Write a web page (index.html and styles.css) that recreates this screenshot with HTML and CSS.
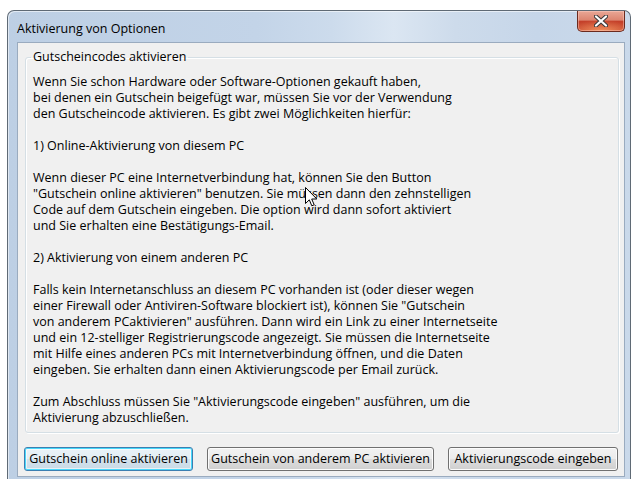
FILE: index.html
```html
<!DOCTYPE html>
<html lang="de">
<head>
<meta charset="utf-8">
<title>Aktivierung von Optionen</title>
<link rel="stylesheet" href="styles.css">
</head>
<body>
<div class="window">
  <div class="titlebar">
    <span class="title">Aktivierung von Optionen</span>
    <button class="close" type="button" aria-label="Schließen">
      <svg width="14" height="12" viewBox="0 0 14 12" aria-hidden="true">
        <path d="M2 1.5 L12 10.5 M12 1.5 L2 10.5" stroke="#3a3a3a" stroke-width="4.2" stroke-linecap="round"/>
        <path d="M2 1.5 L12 10.5 M12 1.5 L2 10.5" stroke="#ffffff" stroke-width="2.2" stroke-linecap="round"/>
      </svg>
    </button>
  </div>
  <div class="client">
    <fieldset class="group">
      <legend>Gutscheincodes aktivieren</legend>
      <p>Wenn Sie schon Hardware oder Software-Optionen gekauft haben,<br>bei denen ein Gutschein beigefügt war, müssen Sie vor der Verwendung<br>den Gutscheincode aktivieren. Es gibt zwei Möglichkeiten hierfür:</p>
      <p>1) Online-Aktivierung von diesem PC</p>
      <p>Wenn dieser PC eine Internetverbindung hat, können Sie den Button<br>"Gutschein online aktivieren" benutzen. Sie müssen dann den zehnstelligen<br>Code auf dem Gutschein eingeben. Die option wird dann sofort aktiviert<br>und Sie erhalten eine Bestätigungs-Email.</p>
      <p>2) Aktivierung von einem anderen PC</p>
      <p>Falls kein Internetanschluss an diesem PC vorhanden ist (oder dieser wegen<br>einer Firewall oder Antiviren-Software blockiert ist), können Sie "Gutschein<br>von anderem PCaktivieren" ausführen. Dann wird ein Link zu einer Internetseite<br>und ein 12-stelliger Registrierungscode angezeigt. Sie müssen die Internetseite<br>mit Hilfe eines anderen PCs mit Internetverbindung öffnen, und die Daten<br>eingeben. Sie erhalten dann einen Aktivierungscode per Email zurück.</p>
      <p>Zum Abschluss müssen Sie "Aktivierungscode eingeben" ausführen, um die<br>Aktivierung abzuschließen.</p>
    </fieldset>
    <div class="actions">
      <button class="btn btn-default btn-online" type="button">Gutschein online aktivieren</button>
      <button class="btn btn-other" type="button">Gutschein von anderem PC aktivieren</button>
      <button class="btn btn-code" type="button">Aktivierungscode eingeben</button>
    </div>
  </div>
</div>
<svg class="cursor" width="13" height="20" viewBox="0 0 13 20" aria-hidden="true">
  <path d="M0.5 0.5 L0.5 16.5 L4.3 12.8 L6.8 18.8 L9.2 17.8 L6.7 12 L11.8 12 Z" fill="#ffffff" stroke="#000000" stroke-width="1" stroke-linejoin="miter"/>
</svg>
</body>
</html>
```

FILE: styles.css
```css
html, body {
  margin: 0;
  padding: 0;
  height: 100%;
  overflow: hidden;
  background: #ffffff;
}

body {
  position: relative;
  font-family: "Open Sans", "Noto Sans", "DejaVu Sans", sans-serif;
  font-size: 12.5px;
  color: #000000;
}

/* Aero glass frame */
.window {
  margin: 10px 0 0 7px;
  width: 624px;
  height: 480px;
  box-sizing: border-box;
  border: 1px solid #5f6a75;
  border-bottom: none;
  border-radius: 7px 7px 0 0;
  background:
    linear-gradient(to right,
      #bdcfe4 0%,
      #c3d4e8 40%,
      #ccdbec 52%,
      #dbe6f2 62%,
      #cddbeb 72%,
      #c6d6e9 85%,
      #cad9ea 100%);
  box-shadow: inset 1px 1px 0 rgba(255, 255, 255, 0.55);
}

.titlebar {
  height: 31px;
  display: flex;
  align-items: flex-start;
  justify-content: space-between;
  padding-left: 9px;
  padding-right: 5px;
}

.title {
  margin-top: 9px;
  font-size: 12.5px;
  line-height: 17px;
  color: #000000;
}

.close {
  width: 48px;
  height: 21px;
  margin: 0;
  padding: 0;
  border: 1px solid #6b2a1e;
  border-top: none;
  border-radius: 0 0 5px 5px;
  background:
    radial-gradient(ellipse 70% 55% at 50% 100%, rgba(255, 170, 110, 0.75), rgba(255, 170, 110, 0) 100%),
    linear-gradient(to bottom, #e9a796 0%, #dc8570 45%, #c4402a 52%, #c84a30 100%);
  box-shadow: inset 0 0 0 1px rgba(255, 210, 200, 0.45);
  display: flex;
  align-items: center;
  justify-content: center;
}

/* Dialog client area */
.client {
  margin: 0 0 0 9px;
  width: 608px;
  height: 435px;
  box-sizing: border-box;
  border: 1px solid #9aabbf;
  background: #f0f0f0;
  padding: 6px 5px 5px 6px;
  display: flex;
  flex-direction: column;
}

.group {
  margin: 0 0 0 1px;
  padding: 9px 8px 6px 7px;
  border: 1px solid #d5dfe5;
  border-radius: 3px;
  box-shadow: inset 1px 1px 0 #ffffff, 1px 1px 0 #ffffff;
  line-height: 16px;
  white-space: nowrap;
}

.group legend {
  padding: 0 2px;
  margin-left: -2px;
  line-height: 16px;
}

.group p {
  margin: 0 0 16px 0;
}

.group p:last-child {
  margin-bottom: 0;
}

.actions {
  margin-top: 14px;
  display: flex;
  gap: 14px;
}

.btn {
  height: 24px;
  box-sizing: border-box;
  padding: 0;
  font-family: inherit;
  font-size: 12.5px;
  color: #000000;
  border: 1px solid #707070;
  border-radius: 3px;
  background: linear-gradient(to bottom, #f2f2f2 0%, #ebebeb 50%, #dddddd 50%, #cfcfcf 100%);
  box-shadow: inset 0 0 0 1px #fcfcfc;
  line-height: 20px;
  white-space: nowrap;
}

.btn-default {
  border-color: #3c7fb1;
  box-shadow: inset 0 0 0 1px #48d8fb, inset 0 0 0 2px rgba(255, 255, 255, 0.6);
  background: linear-gradient(to bottom, #eaf3f8 0%, #e2edf4 50%, #d3e2ec 50%, #c9dae6 100%);
}

.btn-online { width: 169px; }
.btn-other { width: 227px; }
.btn-code { width: 170px; }

/* mouse pointer resting over the dialog text */
.cursor {
  position: absolute;
  left: 305px;
  top: 187px;
}
```
